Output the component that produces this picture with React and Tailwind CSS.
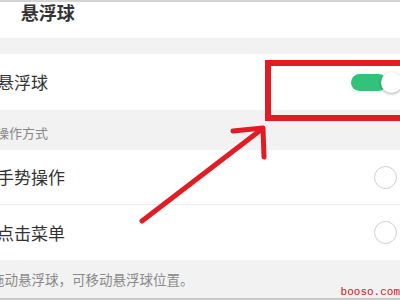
import React from "react";

const font = { fontFamily: '"Noto Sans CJK SC", "Noto Sans", sans-serif' };

const Radio = () => (
  <span className="w-[23px] h-[23px] rounded-full border-[1.5px] border-[#cfcfcf] bg-white" />
);

const Row = ({ label, children, divider }) => (
  <div
    className={`flex items-center justify-between h-[55px] bg-white pr-[3px] ${
      divider ? "border-b border-[#ececec]" : ""
    }`}
  >
    <span className="ml-[-3px] text-[17px] text-[#333]">{label}</span>
    {children}
  </div>
);

export default function App() {
  return (
    <div className="relative w-[400px] h-[300px] overflow-hidden bg-[#f2f2f2]" style={font}>
      {/* HEADER */}
      <div className="h-[2px] bg-[#d4d4d4]" />
      <div className="flex items-start h-[36px] bg-white">
        <span className="ml-[-6px] text-[#bbb] text-[16px] leading-[20px]">‹</span>
        <span className="ml-[22px] text-[18px] leading-[20px] font-bold text-[#333]">悬浮球</span>
      </div>

      <div className="h-[16px]" />

      {/* TOGGLE ROW */}
      <div className="flex items-center justify-between h-[56px] bg-white">
        <span className="ml-[-3px] text-[17px] text-[#333]">悬浮球</span>
        <div className="relative w-[52px] h-[24px] mr-[-2px] flex items-center">
          <div className="w-[36px] h-[17px] rounded-full bg-[#34c17a] ml-[1px]" />
          <div className="absolute right-0 top-[2px] w-[21px] h-[21px] rounded-full bg-white shadow-[0_1px_3px_rgba(0,0,0,0.35)]" />
        </div>
      </div>

      {/* SECTION */}
      <div className="flex items-center h-[40px] pt-[6px]">
        <span className="ml-[-4px] text-[13px] text-[#888]">操作方式</span>
      </div>

      <Row label="手势操作" divider>
        <Radio />
      </Row>
      <Row label="点击菜单">
        <Radio />
      </Row>

      {/* FOOTER NOTE */}
      <div className="flex items-start h-[38px] pt-[9px]">
        <span className="ml-[-9px] text-[13.5px] text-[#8a8a8a]">拖动悬浮球，可移动悬浮球位置。</span>
      </div>
      <div className="h-[2px] bg-[#c9c9c9]" />

      {/* WATERMARK */}
      <span
        className="absolute right-[0px] bottom-[2px] text-[11px] leading-[11px] text-[#d8141c]"
        style={{ fontFamily: '"Liberation Mono", monospace' }}
      >
        booso.com
      </span>

      {/* ANNOTATION */}
      <svg className="absolute inset-0 pointer-events-none" width="400" height="300">
        <rect x="268" y="63" width="140" height="55" fill="none" stroke="#e31b23" strokeWidth="6" />
        <g stroke="#e31b23" strokeWidth="5" strokeLinecap="round" strokeLinejoin="round" fill="none">
          <line x1="142" y1="221" x2="262" y2="129" />
          <polyline points="233,131 263,128 264,157" />
        </g>
      </svg>
    </div>
  );
}
